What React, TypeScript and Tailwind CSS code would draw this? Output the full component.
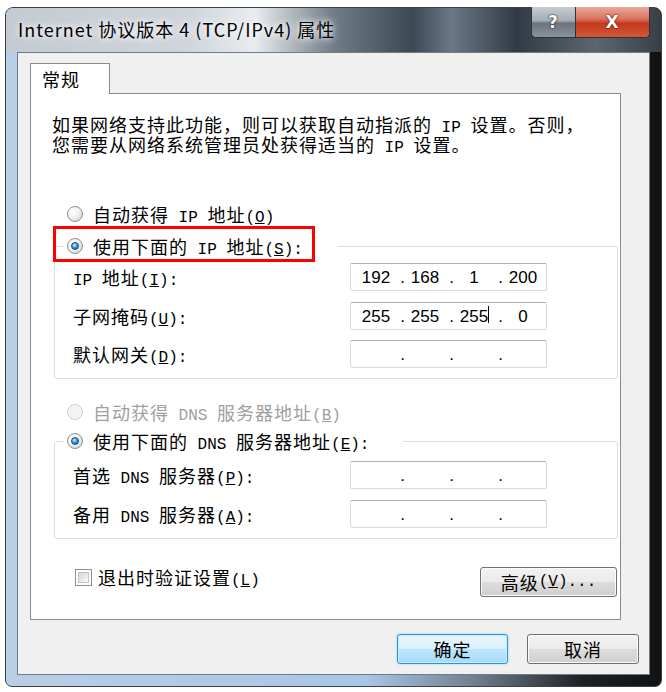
import { Fragment } from "react";

const cjk = "font-['Noto_Sans_CJK_SC',sans-serif]";

function L({ children }: any) {
  return (
    <span className="font-['Liberation_Mono',monospace] text-[16px] leading-[8px] tracking-normal">
      {children}
    </span>
  );
}

function Radio({ checked = false, disabled = false }: any) {
  return (
    <span
      className={`flex h-[16px] w-[16px] shrink-0 items-center justify-center rounded-full border ${
        disabled
          ? "border-[#cfcfcf] bg-[#f4f4f4]"
          : "border-[#8e8f8f] bg-[radial-gradient(circle_at_35%_35%,#ffffff_0%,#f0f0f0_45%,#cdcdcd_100%)]"
      }`}
    >
      {checked && (
        <span className="h-[8px] w-[8px] rounded-full border border-[#1b4c7c] bg-[radial-gradient(circle_at_40%_35%,#d4f1ff_0%,#3b9fe2_45%,#0c4c8c_100%)]" />
      )}
    </span>
  );
}

function IpField({ parts, caret }: { parts?: string[]; caret?: number }) {
  const segs = parts ?? ["", "", "", ""];
  return (
    <div className="flex h-[28px] w-[197px] items-center rounded-[2px] border border-[#d6dae0] border-t-[#abadb3] bg-white pl-[5px] font-['Liberation_Sans',sans-serif] text-[17px] leading-none tracking-normal text-black">
      {segs.map((s, i) => (
        <Fragment key={i}>
          <span className="w-[40px] text-center">
            <span className="relative">
              {s}
              {caret === i && (
                <span className="absolute -right-[1px] -top-[1px] h-[17px] w-px bg-black" />
              )}
            </span>
          </span>
          {i < 3 && <span className="w-[9px] text-right">.</span>}
        </Fragment>
      ))}
    </div>
  );
}

function Btn({ children, primary = false, w }: any) {
  return (
    <button
      className={`flex h-[30px] items-center justify-center rounded-[3px] border text-[18px] leading-none text-black ${w} ${
        primary
          ? "border-[#2f93cf] bg-[linear-gradient(#eaf6fd_0%,#d9f0fc_50%,#bee6fd_50%,#a7d9f5_100%)] shadow-[inset_0_0_0_1px_#c4f0ff,0_0_2px_#7cc8f0]"
          : "border-[#707070] bg-[linear-gradient(#f2f2f2_0%,#ebebeb_50%,#dddddd_50%,#cfcfcf_100%)] shadow-[inset_0_0_0_1px_#fbfbfb]"
      }`}
    >
      {children}
    </button>
  );
}

function Row({ label, field }: any) {
  return (
    <div className="flex h-[28px] items-center">
      <div className="w-[295px] pl-[18px]">{label}</div>
      {field}
    </div>
  );
}

export default function App() {
  return (
    <div className={`h-[692px] w-[666px] bg-white pl-[5px] pt-[7px] ${cjk} text-[18px] leading-[20px] tracking-[1px] text-black`}>
      <div className="flex h-[680px] w-[657px] flex-col rounded-t-[8px] rounded-b-[7px] border border-[#3c4148] bg-[linear-gradient(90deg,#b8cfe6_0%,#a9c6e6_55%,#6d7d8c_72%,#1e2023_88%,#111213_100%)]">
        {/* title bar */}
        <div className="flex h-[44px] items-start rounded-t-[7px] bg-[linear-gradient(90deg,#c3cad1_0%,#cfd5db_28%,#e9ecef_38%,#707c88_50%,#3c4854_62%,#6a7886_68%,#323b45_78%,#5c6670_90%,#3a3f45_100%)]">
          <div className="flex-1 pl-[12px] pt-[11px] text-[18px] tracking-[1px] [text-shadow:0_0_6px_#ffffff,0_0_10px_#ffffff]">
            Internet 协议版本 4 (TCP/IPv4) 属性
          </div>
          <div className="mr-[11px] flex h-[31px] -mt-px rounded-b-[5px] border border-t-0 border-[#2e3236] shadow-[inset_0_0_0_1px_rgba(255,255,255,0.5)]">
            <div className="flex w-[44px] items-center justify-center rounded-bl-[5px] border-r border-[#2e3236] bg-[linear-gradient(#c6ccd3_0%,#a4acb5_45%,#6b747e_55%,#8a939c_100%)] font-['DejaVu_Sans',sans-serif] text-[17px] font-bold text-white [text-shadow:0_0_2px_#222,0_0_1px_#000]">
              ?
            </div>
            <div className="flex w-[73px] items-center justify-center rounded-br-[5px] bg-[linear-gradient(#e9a898_0%,#d9735e_40%,#c2381c_55%,#d4583a_100%)] font-['DejaVu_Sans',sans-serif] text-[17px] font-bold text-white [text-shadow:0_0_2px_#5a1000,0_0_1px_#300]">
              X
            </div>
          </div>
        </div>

        {/* client area */}
        <div className="ml-[11px] flex h-[623px] w-[633px] flex-col border border-[#6f7b86] bg-[#f0f0f0] pt-[10px]">
          <div className="relative z-10 -mb-px ml-[12px] h-[31px] w-[80px] border border-b-0 border-[#898c95] bg-white pl-[11px] pt-[2px] leading-[26px]">
            常规
          </div>
          <div className="ml-[12px] flex h-[527px] w-[591px] flex-col border border-[#898c95] bg-white pl-[21px] pt-[20px]">
            <p className="whitespace-nowrap">
              如果网络支持此功能，则可以获取自动指派的<L> IP </L>设置。否则，
              <br />
              您需要从网络系统管理员处获得适当的<L> IP </L>设置。
            </p>

            <div className="ml-[15px] mt-[50px] flex h-[20px] items-center gap-[10px]">
              <Radio />
              <span>
                自动获得<L> IP </L>地址<L>(<u>O</u>)</L>
              </span>
            </div>

            <fieldset className="ml-[2px] mt-[12px] w-[564px] rounded-[3px] border border-[#d5dfe5] pb-[10px]">
              <legend className="relative ml-[9px] flex h-[20px] w-[274px] items-center gap-[10px] pl-[3px]">
                <Radio checked />
                <span>
                  使用下面的<L> IP </L>地址<L>(<u>S</u>):</L>
                </span>
                <span className="absolute -left-[11px] -top-[10px] h-[36px] w-[262px] border-[3px] border-[#ff0000]" />
              </legend>
              <div className="mt-[7px]">
                <Row
                  label={
                    <>
                      <L>IP </L>地址<L>(<u>I</u>):</L>
                    </>
                  }
                  field={<IpField parts={["192", "168", "1", "200"]} />}
                />
              </div>
              <div className="mt-[11px]">
                <Row
                  label={
                    <>
                      子网掩码<L>(<u>U</u>):</L>
                    </>
                  }
                  field={<IpField parts={["255", "255", "255", "0"]} caret={2} />}
                />
              </div>
              <div className="mt-[10px]">
                <Row
                  label={
                    <>
                      默认网关<L>(<u>D</u>):</L>
                    </>
                  }
                  field={<IpField />}
                />
              </div>
            </fieldset>

            <div className="ml-[15px] mt-[23px] flex h-[20px] items-center gap-[10px] text-[#a0a0a0]">
              <Radio disabled />
              <span>
                自动获得<L> DNS </L>服务器地址<L>(<u>B</u>)</L>
              </span>
            </div>

            <fieldset className="ml-[2px] mt-[9px] w-[564px] rounded-[3px] border border-[#d5dfe5] pb-[10px]">
              <legend className="ml-[9px] flex h-[20px] w-[339px] items-center gap-[10px] pl-[3px]">
                <Radio checked />
                <span>
                  使用下面的<L> DNS </L>服务器地址<L>(<u>E</u>):</L>
                </span>
              </legend>
              <div className="mt-[10px]">
                <Row
                  label={
                    <>
                      首选<L> DNS </L>服务器<L>(<u>P</u>):</L>
                    </>
                  }
                  field={<IpField />}
                />
              </div>
              <div className="mt-[11px]">
                <Row
                  label={
                    <>
                      备用<L> DNS </L>服务器<L>(<u>A</u>):</L>
                    </>
                  }
                  field={<IpField />}
                />
              </div>
            </fieldset>

            <div className="mt-[28px] flex items-start justify-between pr-[3px]">
              <div className="ml-[23px] flex h-[20px] items-center gap-[6px]">
                <span className="h-[17px] w-[17px] border border-[#8e8f8f] bg-white p-[2px]">
                  <span className="block h-full w-full border border-[#c4c4c4] bg-[linear-gradient(135deg,#d6d6d6,#fafafa)]" />
                </span>
                <span>
                  退出时验证设置<L>(<u>L</u>)</L>
                </span>
              </div>
              <Btn w="w-[137px]">
                高级<L>(<u>V</u>)...</L>
              </Btn>
            </div>
          </div>

          <div className="mt-[14px] flex justify-end gap-[19px] pr-[10px]">
            <Btn primary w="w-[111px]">
              确定
            </Btn>
            <Btn w="w-[112px]">取消</Btn>
          </div>
        </div>
      </div>
    </div>
  );
}
